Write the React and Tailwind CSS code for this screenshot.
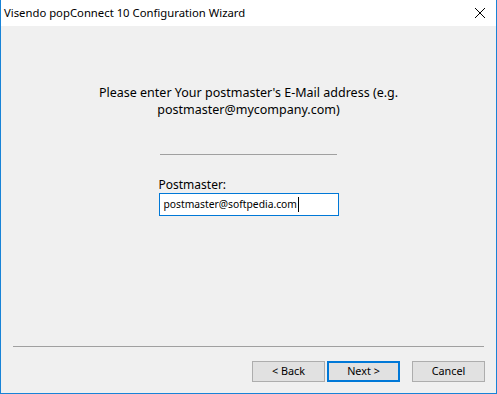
export default function App() {
  const font = { fontFamily: '"Noto Sans", "Open Sans", sans-serif' }
  return (
    <div
      className="w-[497px] h-[394px] flex flex-col bg-[#f0f0f0] border-x border-b border-[#1883d7] text-[12px] text-black overflow-hidden"
      style={font}
    >
      {/* Title bar */}
      <div className="h-[26px] bg-white flex items-center justify-between pl-[3px] pr-[8px] shrink-0">
        <span className="leading-none text-[11.3px]">Visendo popConnect 10 Configuration Wizard</span>
        <svg width="12" height="12" viewBox="0 0 12 12" className="mr-[2px]">
          <path d="M1 1 L11 11 M11 1 L1 11" stroke="#000" strokeWidth="1" />
        </svg>
      </div>

      {/* Content */}
      <div className="flex-1 flex flex-col items-center pt-[58px]">
        <p className="text-center leading-[17px] text-[12.5px]">
          Please enter Your postmaster's E-Mail address (e.g.
          <br />
          postmaster@mycompany.com)
        </p>
        <div className="w-[180px] mt-[36px] flex flex-col">
          <div className="w-[177px] h-px bg-[#a0a0a0] ml-px" />
          <label className="mt-[21px] leading-[17px]">Postmaster:</label>
          <div className="h-[23px] bg-white border border-[#0078d7] flex items-center pl-[4px]">
            <span className="leading-none text-[10.3px]">postmaster@softpedia.com</span>
            <span className="w-px h-[15px] bg-black ml-px" />
          </div>
        </div>
      </div>

      {/* Footer */}
      <div className="shrink-0 px-[11px]">
        <div className="h-px bg-[#a0a0a0] mx-px" />
        <div className="flex justify-end pt-[14px] pb-[11px]">
          <button className="w-[73px] h-[21px] bg-[#e1e1e1] border border-[#adadad] leading-none text-[10.8px]">&lt; Back</button>
          <button className="w-[73px] h-[21px] ml-[2px] bg-[#e1e1e1] border-2 border-[#0078d7] leading-none text-[10.8px]">Next &gt;</button>
          <button className="w-[73px] h-[21px] ml-[12px] bg-[#e1e1e1] border border-[#adadad] leading-none text-[10.8px]">Cancel</button>
        </div>
      </div>
    </div>
  )
}
